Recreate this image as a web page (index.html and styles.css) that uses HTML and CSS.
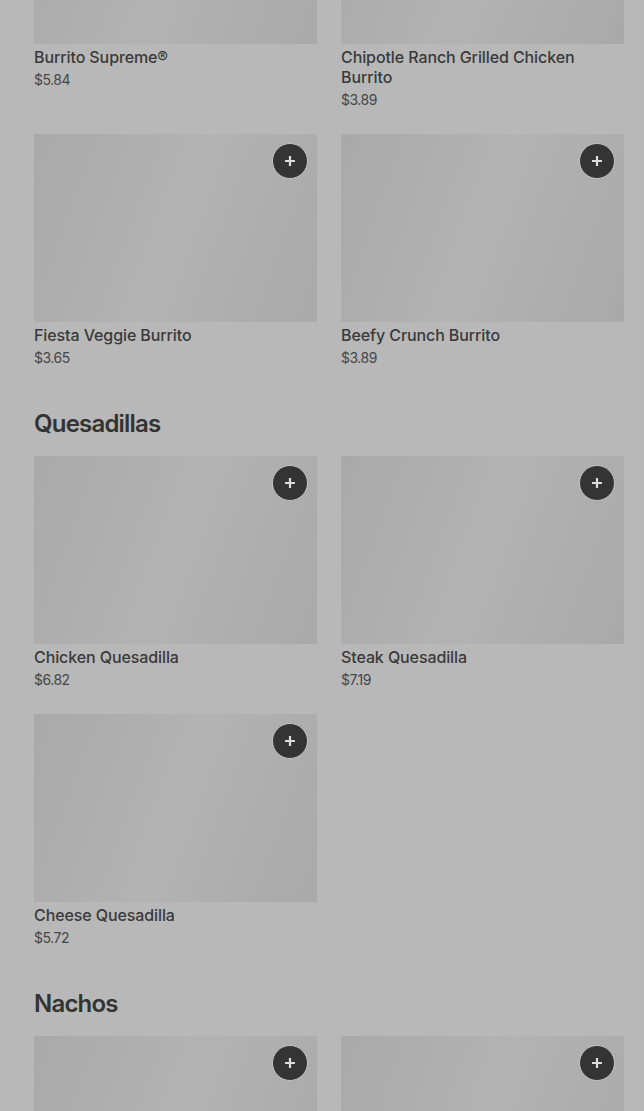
FILE: index.html
```html
<!DOCTYPE html>
<html lang="en">
<head>
<meta charset="utf-8">
<title>Menu</title>
<link rel="stylesheet" href="styles.css">
</head>
<body>
<main class="menu">
  <section class="category">
    <h2 class="category-title">Burritos</h2>
    <div class="grid">
      <article class="item">
        <div class="thumb"><button class="add" aria-label="Add"><svg viewBox="0 0 12 12"><path d="M6 1v10M1 6h10"/></svg></button></div>
        <h3 class="item-name">Burrito Supreme®</h3>
        <p class="item-price">$5.84</p>
      </article>
      <article class="item">
        <div class="thumb"><button class="add" aria-label="Add"><svg viewBox="0 0 12 12"><path d="M6 1v10M1 6h10"/></svg></button></div>
        <h3 class="item-name">Chipotle Ranch Grilled Chicken Burrito</h3>
        <p class="item-price">$3.89</p>
      </article>
      <article class="item">
        <div class="thumb"><button class="add" aria-label="Add"><svg viewBox="0 0 12 12"><path d="M6 1v10M1 6h10"/></svg></button></div>
        <h3 class="item-name">Fiesta Veggie Burrito</h3>
        <p class="item-price">$3.65</p>
      </article>
      <article class="item">
        <div class="thumb"><button class="add" aria-label="Add"><svg viewBox="0 0 12 12"><path d="M6 1v10M1 6h10"/></svg></button></div>
        <h3 class="item-name">Beefy Crunch Burrito</h3>
        <p class="item-price">$3.89</p>
      </article>
    </div>
  </section>
  <section class="category">
    <h2 class="category-title">Quesadillas</h2>
    <div class="grid">
      <article class="item">
        <div class="thumb"><button class="add" aria-label="Add"><svg viewBox="0 0 12 12"><path d="M6 1v10M1 6h10"/></svg></button></div>
        <h3 class="item-name">Chicken Quesadilla</h3>
        <p class="item-price">$6.82</p>
      </article>
      <article class="item">
        <div class="thumb"><button class="add" aria-label="Add"><svg viewBox="0 0 12 12"><path d="M6 1v10M1 6h10"/></svg></button></div>
        <h3 class="item-name">Steak Quesadilla</h3>
        <p class="item-price">$7.19</p>
      </article>
      <article class="item">
        <div class="thumb"><button class="add" aria-label="Add"><svg viewBox="0 0 12 12"><path d="M6 1v10M1 6h10"/></svg></button></div>
        <h3 class="item-name">Cheese Quesadilla</h3>
        <p class="item-price">$5.72</p>
      </article>
    </div>
  </section>
  <section class="category">
    <h2 class="category-title">Nachos</h2>
    <div class="grid">
      <article class="item">
        <div class="thumb"><button class="add" aria-label="Add"><svg viewBox="0 0 12 12"><path d="M6 1v10M1 6h10"/></svg></button></div>
        <h3 class="item-name">Nachos BellGrande®</h3>
        <p class="item-price">$5.49</p>
      </article>
      <article class="item">
        <div class="thumb"><button class="add" aria-label="Add"><svg viewBox="0 0 12 12"><path d="M6 1v10M1 6h10"/></svg></button></div>
        <h3 class="item-name">Chips and Nacho Cheese Sauce</h3>
        <p class="item-price">$1.99</p>
      </article>
    </div>
  </section>
</main>
</body>
</html>
```

FILE: styles.css
```css
html, body {
  margin: 0;
  padding: 0;
  background: #b8b8b8;
  overflow: hidden;
}

body {
  font-family: Inter, "Liberation Sans", sans-serif;
  color: #363636;
}

.menu {
  margin-top: -192px;
  padding: 0 20px 0 34px;
}

.category + .category {
  margin-top: 40px;
}

.category-title {
  margin: 0 0 16px;
  font-size: 24px;
  line-height: 32px;
  font-weight: 600;
  letter-spacing: -0.8px;
  color: #333;
}

.grid {
  display: grid;
  grid-template-columns: 1fr 1fr;
  column-gap: 24px;
  row-gap: 24px;
}

.thumb {
  position: relative;
  height: 188px;
  background: linear-gradient(110deg, #a9a9a9 0%, #b0b0b0 35%, #b3b3b3 50%, #afafaf 70%, #a9a9a9 100%);
}

.add {
  position: absolute;
  top: 9px;
  right: 9px;
  width: 36px;
  height: 36px;
  padding: 0;
  border: 1px solid #c4c4c4;
  border-radius: 50%;
  background: #343434;
  display: flex;
  align-items: center;
  justify-content: center;
  cursor: pointer;
}

.add svg {
  width: 12px;
  height: 12px;
  stroke: #dcdcdc;
  stroke-width: 2.2;
  fill: none;
}

.item-name {
  margin: 3px 0 0;
  font-size: 16px;
  line-height: 20px;
  font-weight: 500;
  letter-spacing: -0.1px;
  color: #3a3a3a;
}

.item-price {
  margin: 3px 0 0;
  font-size: 14px;
  line-height: 20px;
  font-weight: 400;
  letter-spacing: -0.5px;
  color: #474747;
}
```
